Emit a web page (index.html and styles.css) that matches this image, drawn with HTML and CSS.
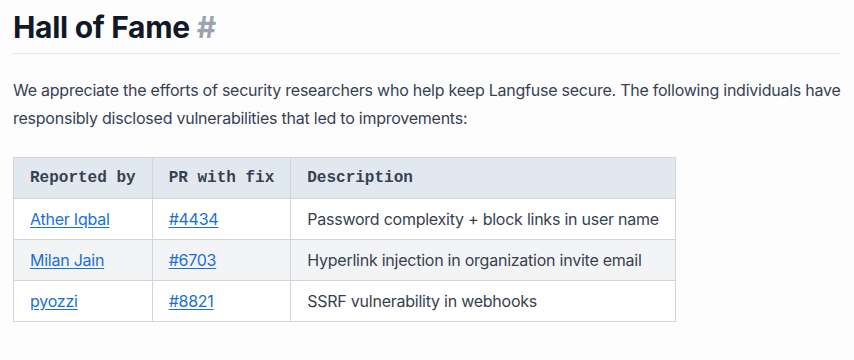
FILE: index.html
```html
<!DOCTYPE html>
<html lang="en">
<head>
    <meta charset="UTF-8">
    <meta name="viewport" content="width=device-width, initial-scale=1.0">
    <title>Hall of Fame</title>
    <link rel="stylesheet" href="styles.css">
</head>
<body>
    <div class="content">
        <h2 class="title">Hall of Fame <a href="#hall-of-fame" class="anchor">#</a></h2>

        <p class="intro">We appreciate the efforts of security researchers who help keep Langfuse secure. The following individuals have responsibly disclosed vulnerabilities that led to improvements:</p>

        <table class="fame-table">
            <thead>
                <tr>
                    <th>Reported by</th>
                    <th>PR with fix</th>
                    <th>Description</th>
                </tr>
            </thead>
            <tbody>
                <tr>
                    <td><a href="#">Ather Iqbal</a></td>
                    <td><a href="#">#4434</a></td>
                    <td>Password complexity + block links in user name</td>
                </tr>
                <tr>
                    <td><a href="#">Milan Jain</a></td>
                    <td><a href="#">#6703</a></td>
                    <td>Hyperlink injection in organization invite email</td>
                </tr>
                <tr>
                    <td><a href="#">pyozzi</a></td>
                    <td><a href="#">#8821</a></td>
                    <td>SSRF vulnerability in webhooks</td>
                </tr>
            </tbody>
        </table>
    </div>
</body>
</html>
```

FILE: styles.css
```css
* {
    margin: 0;
    padding: 0;
    box-sizing: border-box;
}

body {
    font-family: Inter, 'Liberation Sans', sans-serif;
    background-color: #fdfdfe;
    color: #374151;
    letter-spacing: -0.24px;
}

.content {
    padding: 0 13px;
}

.title {
    font-size: 30px;
    font-weight: 700;
    color: #111827;
    line-height: 36px;
    padding-top: 9px;
    padding-bottom: 8px;
    border-bottom: 1px solid #e5e7eb;
    letter-spacing: -0.3px;
}

.title .anchor {
    color: #9ca3af;
    text-decoration: none;
}

.intro {
    font-size: 16px;
    line-height: 28px;
    margin-top: 22px;
    color: #374151;
}

.fame-table {
    margin-top: 25px;
    border-collapse: collapse;
    font-size: 16px;
}

.fame-table th,
.fame-table td {
    border: 1px solid #d1d5db;
    padding: 0 16px;
    height: 41px;
    text-align: left;
    white-space: nowrap;
}

.fame-table th {
    background-color: #e2e8f0;
    font-family: 'Liberation Mono', monospace;
    font-weight: 700;
    letter-spacing: 0;
    color: #374151;
}

.fame-table tbody tr {
    background-color: #ffffff;
}

.fame-table tbody tr:nth-child(even) {
    background-color: #f3f4f6;
}

.fame-table a {
    color: #1a6fd8;
    text-decoration: underline;
    text-underline-offset: 2px;
}
```
